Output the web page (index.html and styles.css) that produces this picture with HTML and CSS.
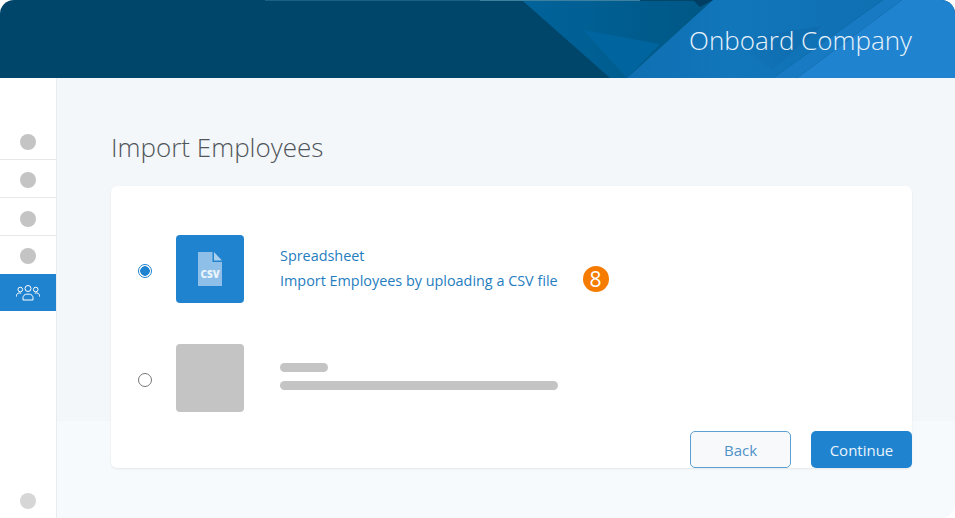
FILE: index.html
```html
<!DOCTYPE html>
<html lang="en">
<head>
<meta charset="utf-8">
<title>Onboard Company</title>
<link rel="stylesheet" href="styles.css">
</head>
<body>
<div class="app">
  <header class="topbar">
    <svg class="topbar-art" viewBox="0 0 955 78" preserveAspectRatio="none" aria-hidden="true">
      <defs>
        <linearGradient id="mid" x1="0" y1="0" x2="1" y2="0">
          <stop offset="0" stop-color="#00639b"/>
          <stop offset="1" stop-color="#005784"/>
        </linearGradient>
        <linearGradient id="bright" x1="0" y1="0" x2="1" y2="0">
          <stop offset="0" stop-color="#0f6fb1"/>
          <stop offset="0.4" stop-color="#1276bb"/>
          <stop offset="1" stop-color="#0f70b2"/>
        </linearGradient>
        <linearGradient id="shade" x1="0" y1="0" x2="1" y2="0">
          <stop offset="0" stop-color="#0e6cae" stop-opacity="0"/>
          <stop offset="1" stop-color="#0e6cae"/>
        </linearGradient>
      </defs>
      <rect width="955" height="78" fill="#00466b"/>
      <polygon points="265,0 480,0 480,1 265,1" fill="#1a5f86"/>
      <polygon points="480,0 640,0 640,1 480,1" fill="#3d809f"/>
      <polygon points="523,1 713,1 627,78 610,78" fill="url(#mid)"/>
      <polygon points="583,30 660,44 627,78" fill="#00659e"/>
      <polygon points="693,0 713,0 700,7" fill="#003f63"/>
      <polygon points="713,0 883,0 773,78 627,78" fill="url(#bright)"/>
      <polygon points="730,40 822,26 773,70" fill="url(#shade)"/>
      <polygon points="883,0 902,0 797,78 773,78" fill="#177ac3"/>
      <polygon points="902,0 955,0 955,78 797,78" fill="#2083cf"/>
    </svg>
    <h1 class="company">Onboard Company</h1>
  </header>
  <div class="body">
    <nav class="side">
      <ul class="steps">
        <li class="step step-a"><span class="dot"></span></li>
        <li class="step step-b"><span class="dot"></span></li>
        <li class="step step-c"><span class="dot"></span></li>
        <li class="step step-d"><span class="dot"></span></li>
        <li class="step-active">
          <svg class="people" viewBox="0 0 24 16" fill="none" stroke="#fff" stroke-width="1" aria-hidden="true">
            <circle cx="12" cy="4" r="3"/>
            <path d="M7 15.5v-2.2c0-2 1.600-3.600 3.600-3.600h2.800c2 0 3.600 1.600 3.600 3.600v2.200z"/>
            <circle cx="4.300" cy="5" r="2.300"/>
            <circle cx="19.700" cy="5" r="2.300"/>
            <path d="M.5 12v-.8c0-1.500 1.200-2.700 2.700-2.700h2"/>
            <path d="M23.500 12v-.8c0-1.500-1.200-2.700-2.700-2.700h-2"/>
          </svg>
        </li>
      </ul>
      <span class="dot dot-help"></span>
    </nav>
    <main class="main">
      <h2 class="title">Import Employees</h2>
      <section class="card">
        <div class="option">
          <span class="radio radio-on"></span>
          <div class="tile tile-blue">
            <svg class="file" viewBox="0 0 24 34" aria-hidden="true">
              <path d="M0 0h14.500v10H24v24H0z" fill="#8dbfe8"/>
              <path d="M16 0l8 8.500h-8z" fill="#a9cfee"/>
              <text x="12" y="25.500" class="file-label">CSV</text>
            </svg>
          </div>
          <div class="copy">
            <div class="copy-line">Spreadsheet</div>
            <div class="copy-row">
              <div class="copy-line">Import Employees by uploading a CSV file</div>
              <span class="badge">8</span>
            </div>
          </div>
        </div>
        <div class="option option-empty">
          <span class="radio"></span>
          <div class="tile tile-grey"></div>
          <div class="skeleton">
            <span class="bar bar-short"></span>
            <span class="bar bar-long"></span>
          </div>
        </div>
        <div class="actions">
          <button class="btn btn-back" type="button">Back</button>
          <button class="btn btn-go" type="button">Continue</button>
        </div>
      </section>
    </main>
  </div>
</div>
</body>
</html>
```
FILE: styles.css
```css
* { box-sizing: border-box; }
html, body { margin: 0; height: 100%; background: #fff; }
body { font-family: "Open Sans", "Liberation Sans", sans-serif; overflow: hidden; }
.app { width: 955px; height: 518px; display: flex; flex-direction: column; border-radius: 14px; overflow: hidden; }

.topbar { position: relative; height: 78px; flex: none; display: flex; justify-content: flex-end; align-items: center; padding: 2px 43px 0 0; }
.topbar-art { position: absolute; inset: 0; width: 100%; height: 100%; }
.company { position: relative; margin: 0; font-size: 26px; font-weight: 300; color: #e6f2fb; line-height: 1; }

.body { flex: 1; display: flex; min-height: 0; }

.side { width: 57px; flex: none; background: #fff; border-right: 1px solid #e9ecef; display: flex; flex-direction: column; padding-top: 46px; }
.steps { list-style: none; margin: 0; padding: 0; }
.step { display: flex; align-items: center; justify-content: center; border-bottom: 1px solid #e8e8e8; }
.step-a { height: 36px; padding-top: 1px; }
.step-b { height: 38px; padding-top: 3px; }
.step-c { height: 38px; padding-top: 5px; }
.step-d { height: 38px; padding-top: 2px; border-bottom: 0; }
.dot { width: 16px; height: 16px; border-radius: 50%; background: #c4c4c4; display: block; }
.step-active { height: 37px; background: #2083cf; display: flex; align-items: center; justify-content: center; }
.people { width: 24px; height: 17px; }
.dot-help { background: #d6d6d6; margin: auto 0 9px 20px; }

.main { flex: 1; min-width: 0; padding: 52px 43px 50px 54px; background: linear-gradient(#f3f7fa 0, #f3f7fa 343px, #f6fafd 343px); }
.title { margin: 0 0 21px; font-size: 26px; font-weight: 300; color: #50555a; line-height: 35px; }

.card { position: relative; height: 282px; background: #fff; border-radius: 6px; box-shadow: 0 1px 2px rgba(0, 0, 0, .08); padding: 49px 0 0 27px; }
.option { display: flex; align-items: center; height: 68px; }
.option-empty { margin-top: 41px; }
.radio { width: 14px; height: 14px; flex: none; border-radius: 50%; border: 1px solid #777; background: #fff; margin: 4px 24px 0 0; }
.radio-on { border: 1px solid #2083cf; background: radial-gradient(circle, #2083cf 0, #2083cf 4.500px, #fff 5px); }
.tile { width: 68px; height: 68px; flex: none; border-radius: 4px; display: flex; align-items: center; justify-content: center; margin-right: 36px; }
.tile-blue { background: #2083cf; }
.tile-grey { background: #c4c4c4; }
.file { width: 24px; height: 34px; }
.file-label { font-family: "Open Sans", sans-serif; font-size: 10px; font-weight: 800; fill: #eaf4fc; text-anchor: middle; }

.copy { color: #1f7dc0; font-size: 14.400px; line-height: 25px; padding-bottom: 2px; }
.copy-row { display: flex; align-items: center; }
.badge { width: 26px; height: 26px; margin-left: 25px; margin-top: -4px; border-radius: 50%; background: #f57c00; color: #fff; font-size: 21px; font-weight: 500; line-height: 26px; text-align: center; }

.skeleton { display: flex; flex-direction: column; gap: 9px; padding-bottom: 3px; }
.bar { display: block; height: 9px; border-radius: 5px; background: #c4c4c4; }
.bar-short { width: 48px; }
.bar-long { width: 278px; }

.actions { position: absolute; right: 0; bottom: 0; display: flex; gap: 20px; }
.btn { width: 101px; height: 37px; border-radius: 5px; font: 400 15px "Open Sans", sans-serif; padding: 0; }
.btn-back { background: #f8f9fb; border: 1px solid #5b9fd3; color: #4f93c9; }
.btn-go { background: #2083cf; border: 0; color: #eaf4fc; }
```
